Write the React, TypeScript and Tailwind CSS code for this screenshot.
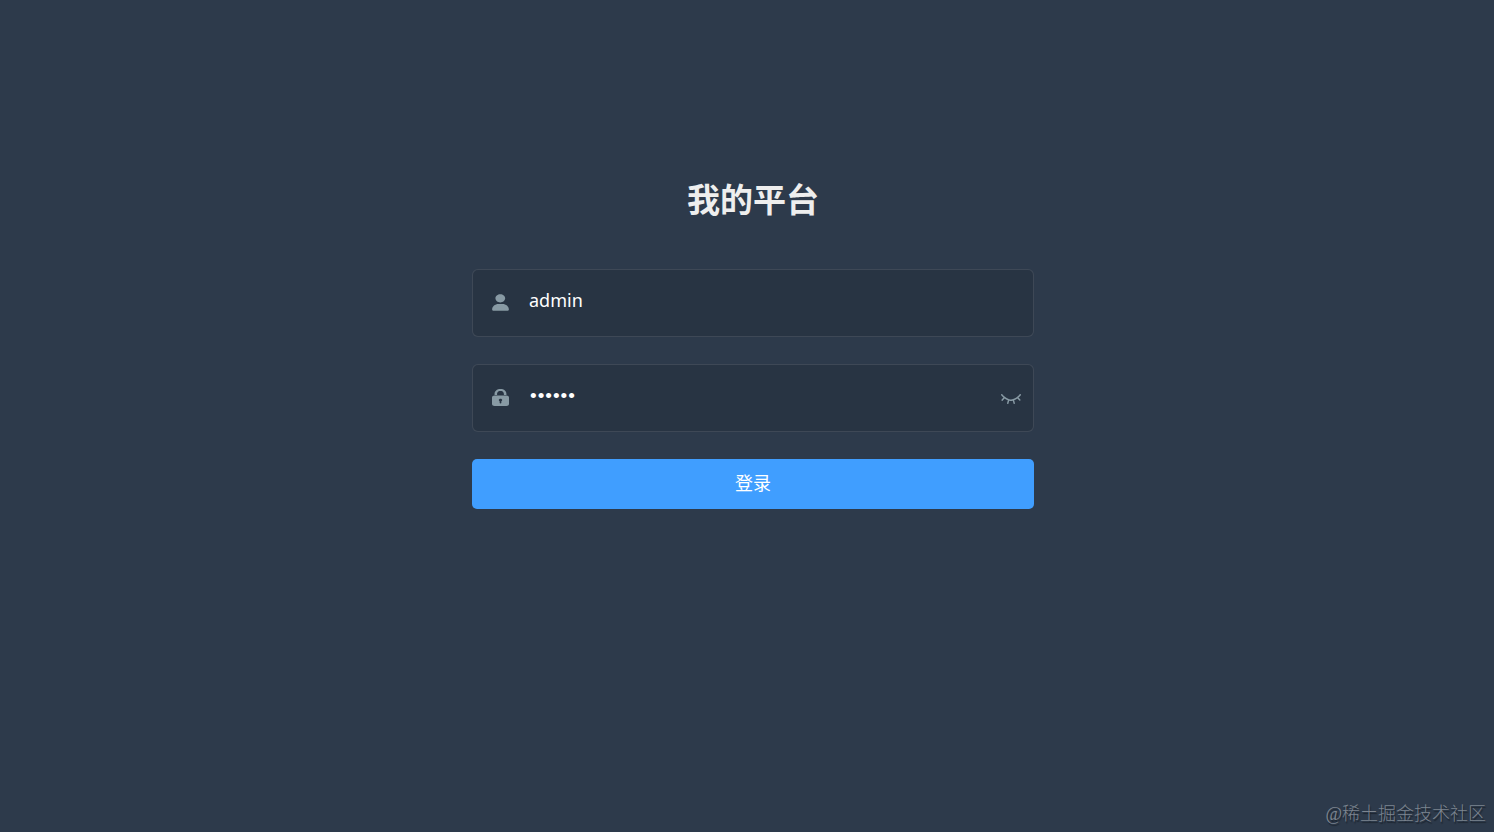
import { useState } from "react";

interface IconProps {
  className?: string;
}

function UserIcon({ className }: IconProps) {
  return (
    <svg viewBox="0 0 130 130" fill="currentColor" className={className}>
      <path d="M63.444 64.996c20.633 0 37.359-14.308 37.359-31.953 0-17.649-16.726-31.952-37.359-31.952-20.631 0-37.36 14.303-37.36 31.952 0 17.645 16.729 31.953 37.36 31.953zM80.57 75.65H49.434c-26.652 0-48.26 18.477-48.26 41.27v2.664c0 9.316 21.608 9.325 48.26 9.325H80.57c26.649 0 48.256-.344 48.256-9.325v-2.663c0-22.794-21.605-41.271-48.256-41.271z" />
    </svg>
  );
}

function LockIcon({ className }: IconProps) {
  return (
    <svg viewBox="0 0 128 128" fill="currentColor" className={className}>
      <path d="M108.8 44.322H89.6v-5.36c0-9.04-3.308-24.163-25.6-24.163-23.145 0-25.6 16.881-25.6 24.162v5.361H19.2v-5.36C19.2 15.281 36.798 0 64 0c27.202 0 44.8 15.281 44.8 38.961v5.361zm-32 39.356c0-5.44-5.763-9.832-12.8-9.832-7.037 0-12.8 4.392-12.8 9.832 0 3.682 2.567 6.808 6.407 8.477v11.205c0 2.718 2.875 4.962 6.4 4.962 3.524 0 6.4-2.244 6.4-4.962V92.155c3.833-1.669 6.393-4.795 6.393-8.477zM128 64v49.201c0 8.158-8.645 14.799-19.2 14.799H19.2C8.651 128 0 121.359 0 113.201V64c0-8.153 8.645-14.799 19.2-14.799h89.6c10.555 0 19.2 6.646 19.2 14.799z" />
    </svg>
  );
}

function EyeClosedIcon({ className }: IconProps) {
  return (
    <svg viewBox="0 0 128 64" fill="currentColor" className={className}>
      <path d="M127.072 7.994c1.37-2.208.914-5.152-.914-6.87-2.056-1.717-4.797-1.226-6.396.982-.229.245-25.586 32.382-55.74 32.382-29.24 0-55.74-32.382-55.968-32.627-1.6-1.963-4.57-2.208-6.397-.49C-.17 3.086-.399 6.275 1.2 8.238c.457.736 5.94 7.36 14.62 14.72L4.17 35.96c-1.828 1.963-1.6 5.152.228 6.87.457.98 1.6 1.471 2.742 1.471s2.284-.49 3.198-1.472l12.564-13.983c5.94 4.416 13.021 8.587 20.788 11.53l-4.797 17.418c-.685 2.699.686 5.397 3.198 6.133h1.37c2.057 0 3.884-1.472 4.341-3.68L52.6 42.83c3.655.736 7.538 1.227 11.422 1.227 3.883 0 7.767-.49 11.422-1.227l4.797 17.173c.457 2.208 2.513 3.68 4.34 3.68.457 0 .914 0 1.143-.246 2.513-.736 3.883-3.434 3.198-6.133l-4.797-17.172c7.767-2.944 14.848-7.114 20.788-11.53l12.336 13.738c.913.981 2.056 1.472 3.198 1.472s2.284-.49 3.198-1.472c1.828-1.963 1.828-4.906.228-6.87l-11.65-13.001c9.366-7.36 14.849-14.474 14.849-14.474z" />
    </svg>
  );
}

export default function App() {
  const [username, setUsername] = useState("admin");
  const [password, setPassword] = useState("111111");
  const [showPassword, setShowPassword] = useState(false);

  return (
    <div className="relative h-screen overflow-hidden bg-[#2d3a4b] font-['Noto_Sans','Noto_Sans_CJK_SC',sans-serif]">
      <form
        className="ml-[472px] w-[562px] pt-[176px]"
        onSubmit={(e) => e.preventDefault()}
      >
        <h3 className="mb-[45px] text-center text-[33px] leading-[48px] font-bold text-[#eee]">
          我的平台
        </h3>

        {/* Username */}
        <div className="mb-[27px] flex h-[68px] items-center rounded-md border border-white/10 bg-black/10 pl-[19px]">
          <UserIcon className="mb-px size-[17px] shrink-0 text-[#889aa4]" />
          <input
            type="text"
            value={username}
            onChange={(e) => setUsername(e.target.value)}
            className="mb-1.5 ml-5 h-[58px] min-w-0 flex-1 bg-transparent text-lg text-white outline-none"
          />
        </div>

        {/* Password */}
        <div className="mb-[27px] flex h-[68px] items-center rounded-md border border-white/10 bg-black/10 pr-3 pl-[19px]">
          <LockIcon className="mb-px size-[17px] shrink-0 text-[#889aa4]" />
          <input
            type={showPassword ? "text" : "password"}
            value={password}
            onChange={(e) => setPassword(e.target.value)}
            className="mb-1 ml-5 h-[58px] min-w-0 flex-1 bg-transparent pl-px font-['Liberation_Sans',sans-serif] text-[19px] tracking-[1px] text-white outline-none"
          />
          <button
            type="button"
            onClick={() => setShowPassword(!showPassword)}
            className="mt-0.5 text-[#889aa4]"
          >
            <EyeClosedIcon className="h-[10px] w-5" />
          </button>
        </div>

        <button
          type="submit"
          className="h-[50px] w-full rounded-[5px] bg-[#409eff] pb-1 font-['Noto_Sans_CJK_SC',sans-serif] text-lg text-white"
        >
          登录
        </button>
      </form>

      {/* Watermark */}
      <span className="absolute right-2 bottom-[5px] font-['Liberation_Serif','Noto_Sans_CJK_SC',serif] text-lg leading-[26px] font-light text-[#7d8590] [text-shadow:1px_2px_1px_rgba(0,0,0,0.4)]">
        @稀土掘金技术社区
      </span>
    </div>
  );
}
